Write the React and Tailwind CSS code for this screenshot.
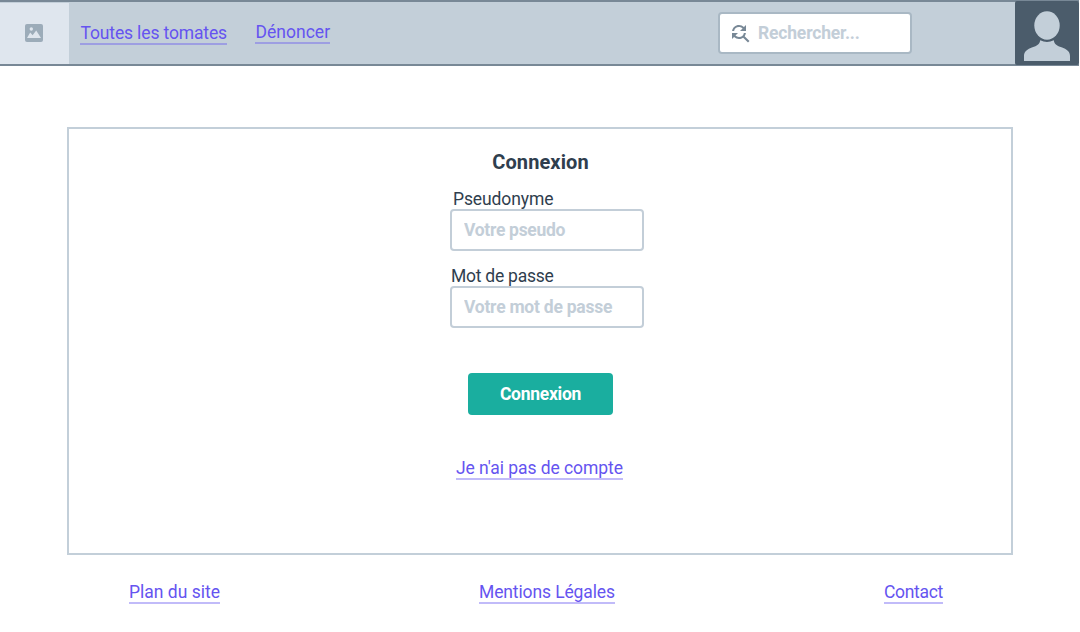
import { MdFindReplace } from "react-icons/md";

function Link({ children, className = "" }) {
  return (
    <a
      href="#"
      className={`block h-6 whitespace-nowrap border-b-2 border-[#6554f0]/40 text-[17.5px] leading-6 text-[#6554f0] ${className}`}
    >
      {children}
    </a>
  );
}

function Field({ label, labelClass, inputClass, ...props }) {
  return (
    <label className="flex w-[194px] flex-col">
      <span className={`h-[22px] text-[17.5px] leading-6 text-[#2f3e4e] ${labelClass}`}>{label}</span>
      <input
        className={`h-[42px] w-full rounded border-2 border-[#c3ced8] bg-white px-3 text-[17.5px] font-bold outline-none placeholder:text-[#c3ced8] placeholder:opacity-100 ${inputClass}`}
        {...props}
      />
    </label>
  );
}

function ImageIcon() {
  return (
    <svg width="18" height="18" viewBox="0 0 18 18">
      <rect width="18" height="18" rx="2" fill="#9cacb9" />
      <circle cx="6.3" cy="5" r="1.7" fill="#dfe6ee" />
      <path d="M2 14 5.2 8.6 7.6 11.2 11.2 6.6 16 14Z" fill="#dfe6ee" />
    </svg>
  );
}

function Avatar() {
  return (
    <svg width="64" height="64" viewBox="0 0 64 64" className="rounded-[2px] bg-[#4b5c6b]">
      <ellipse cx="32" cy="24.5" rx="12.7" ry="14.2" fill="#c3cfd9" />
      <path
        d="M25.2 39.2Q32 42.6 38.8 39.2C39.4 43.6 42.2 44.8 46.5 46.2C51.8 48 55 50.6 55 55V60H9V55C9 50.6 12.2 48 17.5 46.2C21.8 44.8 24.6 43.6 25.2 39.2Z"
        fill="#c3cfd9"
      />
    </svg>
  );
}

export default function App() {
  return (
    <div className="h-[632px] w-[1080px] overflow-hidden bg-white font-['Roboto',sans-serif]">
      <header className="flex h-[66px] w-[1079px] items-start border-y-2 border-[#788896] bg-[#c3cfd9]">
        <div className="mt-px flex h-[61px] w-[69px] bg-[#dfe6ee] pl-[25px] pt-[21px]">
          <ImageIcon />
        </div>
        <nav className="flex pl-[11px]">
          <Link className="mt-[19px] w-[147px] pl-[0.5px] tracking-[-0.14px]">Toutes les tomates</Link>
          <Link className="ml-7 mt-[18px] w-[75px] pl-[0.5px] tracking-[0.02px]">Dénoncer</Link>
        </nav>
        <div className="ml-auto mt-[10px] flex h-[42px] w-[194px] items-center rounded border-2 border-[#a9b8c4] bg-white pl-2">
          <MdFindReplace className="size-6 shrink-0 text-[#788896]" />
          <input
            className="ml-1.5 w-[140px] bg-transparent text-[17.5px] font-bold tracking-[-0.18px] outline-none placeholder:text-[#c3ced8] placeholder:opacity-100"
            placeholder="Rechercher..."
          />
        </div>
        <div className="-mt-px ml-[103px]">
          <Avatar />
        </div>
      </header>

      <main className="ml-[67px] mt-[61px] flex h-[428px] w-[946px] flex-col items-center border-2 border-[#c3cfd9]">
        <h1 className="mt-5 pl-px text-xl font-bold leading-[26px] tracking-[0.1px] text-[#2f3e4e]">Connexion</h1>
        <form className="flex flex-col items-center pt-3">
          <div className="flex flex-col gap-[13px] pl-3.5">
            <Field
              label="Pseudonyme"
              labelClass="pl-[3px] tracking-[-0.1px]"
              inputClass="tracking-[-0.3px]"
              placeholder="Votre pseudo"
            />
            <Field
              label="Mot de passe"
              labelClass="pl-px tracking-[-0.25px]"
              inputClass="tracking-[-0.24px]"
              placeholder="Votre mot de passe"
              type="password"
            />
          </div>
          <button
            type="button"
            className="mt-[45px] h-[42px] w-[145px] rounded bg-[#1aae9f] pl-px text-[17.5px] font-bold tracking-[-0.28px] text-white"
          >
            Connexion
          </button>
        </form>
        <Link className="mr-px mt-[41px] w-[167px] tracking-[-0.07px]">Je n'ai pas de compte</Link>
      </main>

      <footer className="flex pl-[129px] pt-[25px]">
        <Link className="w-[91px]">Plan du site</Link>
        <Link className="ml-[259px] w-[136px] tracking-[-0.12px]">Mentions Légales</Link>
        <Link className="ml-[269px] w-[59px] tracking-[-0.31px]">Contact</Link>
      </footer>
    </div>
  );
}
